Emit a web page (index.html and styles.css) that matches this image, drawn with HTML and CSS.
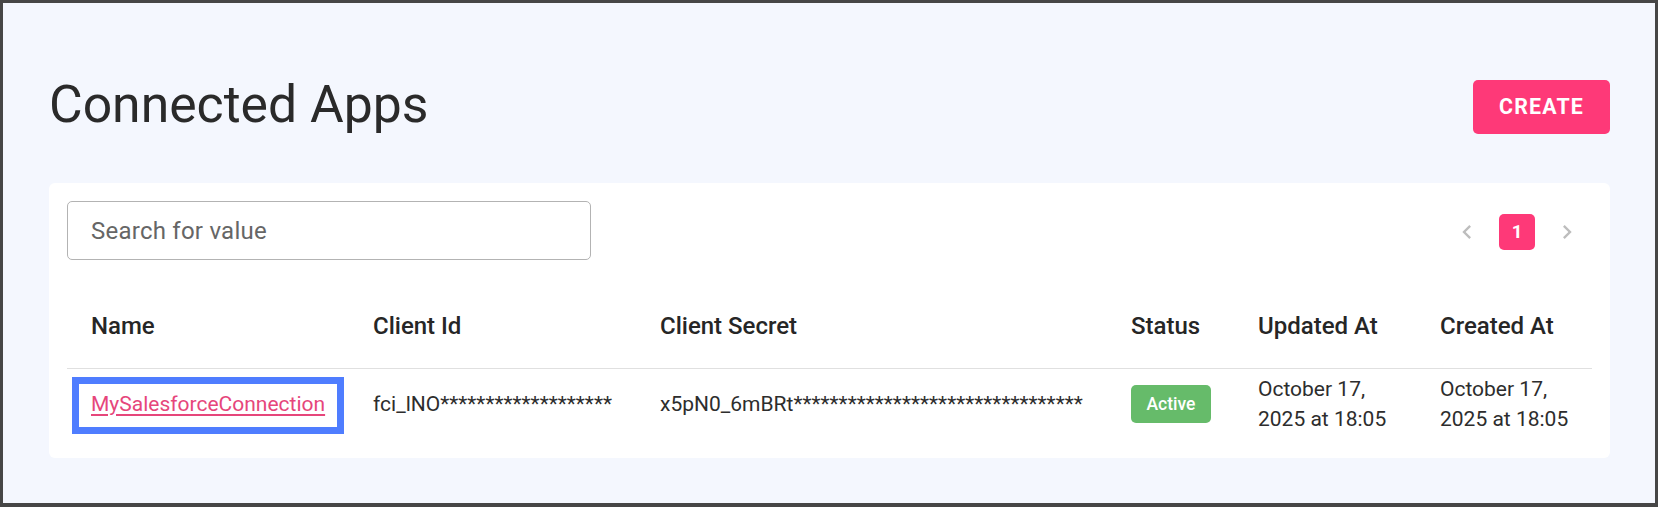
FILE: index.html
```html
<!DOCTYPE html>
<html lang="en">
<head>
<meta charset="utf-8">
<title>Connected Apps</title>
<link rel="stylesheet" href="styles.css">
</head>
<body>
<div class="frame">
  <div class="page-header">
    <h1 class="page-title">Connected Apps</h1>
    <button class="btn-create" type="button">CREATE</button>
  </div>
  <div class="card">
    <div class="toolbar">
      <input class="search" type="text" placeholder="Search for value">
      <nav class="pager">
        <span class="pager-item pager-arrow">
          <svg width="28" height="28" viewBox="0 0 24 24"><path d="M15.41 7.41 14 6l-6 6 6 6 1.41-1.41L10.83 12z" fill="#bdbdbd"/></svg>
        </span>
        <span class="pager-item"><span class="page-current">1</span></span>
        <span class="pager-item pager-arrow">
          <svg width="28" height="28" viewBox="0 0 24 24"><path d="M10 6 8.59 7.41 13.17 12l-4.58 4.59L10 18l6-6z" fill="#bdbdbd"/></svg>
        </span>
      </nav>
    </div>
    <table class="apps">
      <colgroup>
        <col class="c-name"><col class="c-id"><col class="c-secret"><col class="c-status"><col class="c-updated"><col class="c-created">
      </colgroup>
      <thead>
        <tr>
          <th>Name</th>
          <th>Client Id</th>
          <th>Client Secret</th>
          <th>Status</th>
          <th>Updated At</th>
          <th>Created At</th>
        </tr>
      </thead>
      <tbody>
        <tr>
          <td><a class="app-link" href="#">MySalesforceConnection</a></td>
          <td>fci_lNO*******************</td>
          <td>x5pN0_6mBRt********************************</td>
          <td><span class="badge">Active</span></td>
          <td>October 17, 2025 at 18:05</td>
          <td>October 17, 2025 at 18:05</td>
        </tr>
      </tbody>
    </table>
  </div>
</div>
</body>
</html>
```
FILE: styles.css
```css
html, body {
  margin: 0;
  padding: 0;
}
body {
  font-family: Roboto, "Liberation Sans", Arial, sans-serif;
  color: #2b2b2b;
}
.frame {
  height: 507px;
  box-sizing: border-box;
  border: 3px solid #464646;
  border-bottom-width: 4px;
  background: #f4f7fe;
  padding: 71px 45px 0 46px;
}
.page-header {
  display: flex;
  justify-content: space-between;
  align-items: center;
  height: 62px;
}
.page-title {
  margin: 0;
  font-size: 51.7px;
  line-height: 62px;
  font-weight: 400;
  color: #2a2a2a;
}
.btn-create {
  width: 137px;
  height: 54px;
  border: none;
  border-radius: 5px;
  background: #fe3978;
  color: #fff;
  font-family: Roboto, "Liberation Sans", Arial, sans-serif;
  font-size: 21.33px;
  font-weight: 700;
  letter-spacing: 0.055em;
  padding: 0;
  margin-top: 3px;
}
.card {
  margin-top: 47px;
  background: #fff;
  border-radius: 6px;
  padding: 18px;
}
.toolbar {
  display: flex;
  justify-content: space-between;
  align-items: center;
  margin-bottom: 26px;
}
.search {
  width: 524px;
  height: 59px;
  box-sizing: border-box;
  border: 1px solid #b3b3b3;
  border-radius: 5px;
  padding: 0 23px;
  font-family: Roboto, "Liberation Sans", Arial, sans-serif;
  font-size: 24px;
  letter-spacing: 0.01em;
  color: #333;
  outline: none;
}
.search::placeholder {
  color: #666;
  opacity: 1;
}
.pager {
  display: flex;
  align-items: center;
  margin-top: 3px;
}
.pager-item {
  width: 50px;
  height: 36px;
  display: flex;
  align-items: center;
  justify-content: center;
}
.pager-arrow svg {
  display: block;
}
.page-current {
  width: 36px;
  height: 36px;
  border-radius: 5px;
  background: #fe3978;
  color: #fff;
  font-weight: 700;
  font-size: 18.67px;
  display: flex;
  align-items: center;
  justify-content: center;
}
.apps {
  width: 100%;
  border-collapse: collapse;
  table-layout: fixed;
  font-size: 21px;
  line-height: 30.5px;
}
.c-name { width: 282px; }
.c-id { width: 287px; }
.c-secret { width: 471px; }
.c-status { width: 127px; }
.c-updated { width: 182px; }
.c-created { width: 176px; }
.apps th {
  text-align: left;
  font-size: 24px;
  font-weight: 500;
  color: #262626;
  padding: 24.5px 8px 26.5px 24px;
  border-bottom: 1px solid #e0e0e0;
}
.apps td {
  padding: 5px 8px 5px 24px;
  vertical-align: middle;
  color: #2d2d2d;
}
.app-link {
  display: inline-block;
  color: #e6467b;
  text-decoration: underline;
  text-underline-offset: 3px;
  padding: 4.5px 12px 8px;
  margin: -4.5px -12px -8px;
  outline: 7px solid #4f7dff;
}
.badge {
  display: inline-block;
  background: #66bb6a;
  color: #fff;
  font-size: 17.5px;
  font-weight: 500;
  line-height: 24px;
  padding: 7px 15.5px;
  border-radius: 5px;
}
```
